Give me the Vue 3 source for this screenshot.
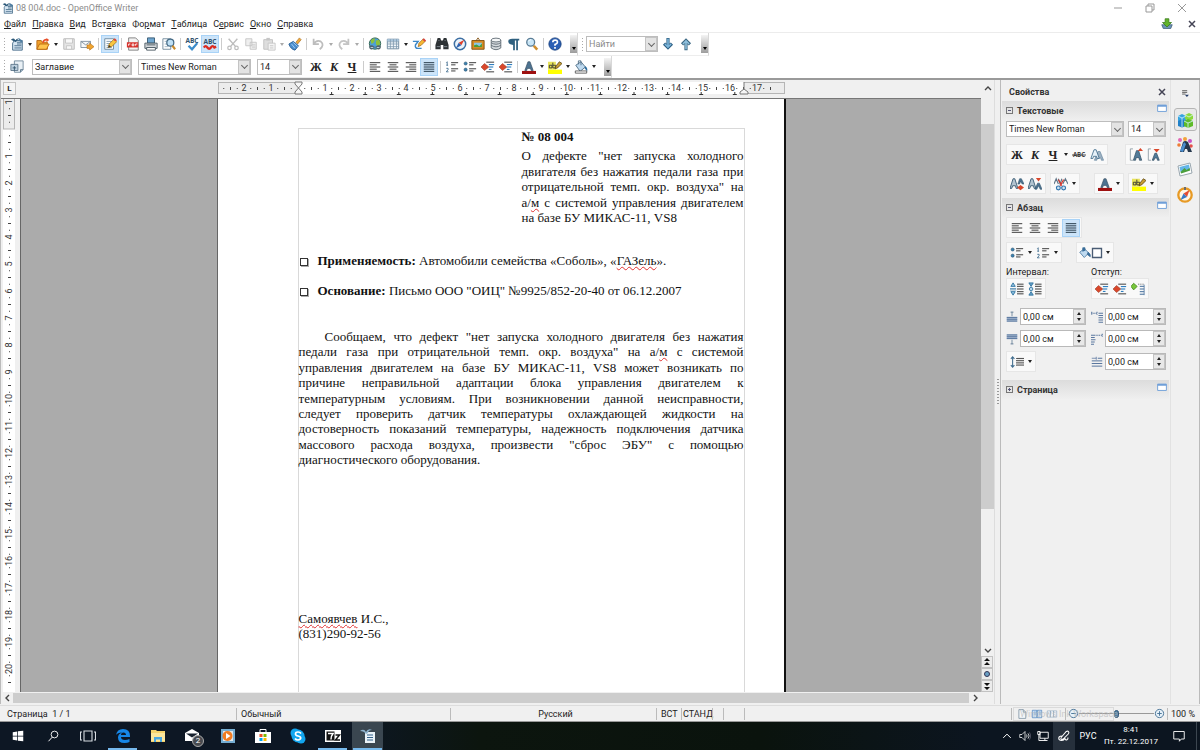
<script setup>
import { h, ref } from 'vue'

const lines = (x, ys, w, c = '#555') =>
  ys.map((y, i) => `<path d="M${Array.isArray(x) ? x[i] : x} ${y}h${Array.isArray(w) ? w[i] : w}" stroke="${c}" stroke-width="1.3" fill="none"/>`).join('')

const letterA = (x, fill = '#4d7391') =>
  `<path d="M${x} 12L${x + 3.6} 2h2.4L${x + 9.6} 12h-2.4l-.7-2.4h-3.6L${x + 2.2} 12z" fill="${fill}" stroke="#33495c" stroke-width=".7"/>`

const numbering =
  '<path d="M2.5 2v4M1.5 3l1-1M1.5 6h2M1.5 9.5h2v1.5l-2 2.500h2.500" stroke="#3f6c8e" stroke-width="1" fill="none"/>' + lines(7, [3, 5.5, 10, 12.5], [8, 5, 8, 5])
const bullets =
  '<circle cx="3" cy="4" r="1.800" fill="#3b82b0" stroke="#2a4d68" stroke-width=".6"/><circle cx="3" cy="11" r="1.800" fill="#3b82b0" stroke="#2a4d68" stroke-width=".6"/>' + lines(7, [3, 5.500, 10, 12.500], [8, 5, 8, 5])
const outdent =
  '<path d="M0 8l4-4 5 4-5 4z" fill="#d9472b" stroke="#8f3a26" stroke-width=".6"/>' + lines(6, [2.500, 13.500], 9) + lines(9, [5.200, 8, 10.800], [6, 5, 3], '#2f7fc0')
const page = '<path d="M3 1h7l4 4v10H3z" fill="#f4f8fb" stroke="#5a7388"/><path d="M10 1v4h4" fill="#d5e2ec" stroke="#5a7388"/>'

const icons = {
  writer: '<path d="M5 4h9v11H3V7z" fill="#d7e6f2" stroke="#3c6482"/><path d="M1 3q4-3 5 1q2-3 5-2q-3 0-4 4z" fill="#2c5878"/><path d="M8 6h5M8 8h5M5 10h8M5 12.500h8" stroke="#3c6482"/><path d="M10 1l4 3v3l-4-3z" fill="#4f7ea1"/>',
  open: '<path d="M1 14V4h5l1 2h6v8z" fill="#f0a02c" stroke="#b76710"/><path d="M1 14l3-6h11l-3 6z" fill="#ffc44d" stroke="#b76710"/><path d="M7 6q1-4 5-4V1l3 2.500-3 2.500V4q-3 0-3 3z" fill="#e8502c"/>',
  save: '<path d="M2 2h12v12H2z" fill="#e6e6e6" stroke="#b8b8b8"/><path d="M4 2h8v5H4zM5 10h6v4H5z" fill="#f8f8f8" stroke="#c2c2c2"/>',
  mail: '<path d="M1 5h11v7H1z" fill="#f7f9fa" stroke="#7d8e9c"/><path d="M1 5l5.500 4L12 5" stroke="#7d8e9c" fill="none"/><path d="M8 9h3V7l5 4-5 4v-2H8z" fill="#f0a530" stroke="#b56e16" stroke-width=".7"/>',
  edit: '<path d="M2 2h10v12H2z" fill="#fff" stroke="#67859b"/><path d="M4 5h6M4 7.500h5M4 10h3M4 12h6" stroke="#7794aa"/><path d="M6 12l1-4 6-6 3 3-6 6z" fill="#f9c640" stroke="#9a6a1a" stroke-width=".8"/><path d="M6 12l1-3 2 2z" fill="#333"/><path d="M12 3l1.500-1.500 2 2L14 5z" fill="#d44"/>',
  pdf: '<path d="M3 1h8l3 3v11H3z" fill="#f2f2f2" stroke="#777"/><path d="M1 6h13v6H1z" fill="#d6322c"/><path d="M3 10V8h2M7 10V8h2v2zM11 10V8h2" stroke="#fff" fill="none"/>',
  print: '<path d="M4 1h8v6H4z" fill="#6fa6d0" stroke="#34566f"/><path d="M1 7h14v6H1z" fill="#d5d9dc" stroke="#44525d"/><path d="M3 12h10v3H3z" fill="#fafafa" stroke="#44525d"/><path d="M3 9h10" stroke="#44525d"/>',
  preview: '<path d="M1 2h9v12H1z" fill="#fff" stroke="#6c8597"/><path d="M3 5h4M3 8h3M3 11h4" stroke="#9fb3c2"/><circle cx="9.500" cy="6.500" r="4" fill="#bfe0f5" stroke="#426884" stroke-width="1.400"/><path d="M12 10l3 4" stroke="#c98b2e" stroke-width="2.400"/>',
  spell: '<text x="8" y="7" text-anchor="middle" font-family="Open Sans, sans-serif" font-size="7.500" font-weight="700" fill="#31526c">ABC</text><path d="M4 10l4 4 6-7" stroke="#3c8dcb" stroke-width="2.600" fill="none"/>',
  autospell: '<text x="8" y="8" text-anchor="middle" font-family="Open Sans, sans-serif" font-size="7.500" font-weight="700" fill="#31526c">ABC</text><path d="M1 12q2-3 4 0t4 0t4 0l2-1" stroke="#dc2a20" stroke-width="2.600" fill="none"/>',
  cut: '<path d="M3 2l8 9M13 2L5 11" stroke="#bdbdbd" stroke-width="1.600"/><circle cx="4" cy="12.500" r="2" fill="none" stroke="#bdbdbd" stroke-width="1.400"/><circle cx="12" cy="12.500" r="2" fill="none" stroke="#bdbdbd" stroke-width="1.400"/>',
  copy: '<path d="M2 2h7v8H2zM7 6h7v8H7z" fill="#efefef" stroke="#c4c4c4"/><path d="M9 9h4M9 11.500h4" stroke="#c4c4c4"/>',
  paste: '<path d="M2 3h10v11H2z" fill="#dedede" stroke="#c0c0c0"/><path d="M5 1h4v3H5z" fill="#c6c6c6"/><path d="M7 7h8v8H7z" fill="#f4f4f4" stroke="#c4c4c4"/><path d="M9 10h4M9 12.500h4" stroke="#c4c4c4"/>',
  brush: '<path d="M9 6l4-5 2 2-4 5z" fill="#f0a93a" stroke="#a3671a" stroke-width=".7"/><path d="M1 8l5-3 6 5-4 5q-5-1-7-7z" fill="#4b8ecf" stroke="#265c90"/><path d="M4 8l4 5M6 6l5 5" stroke="#a9d0f0"/>',
  undo: '<path d="M3 2v6h6M3 8q3-5 8-3q5 4-1 9" fill="none" stroke="#bdbdbd" stroke-width="2"/>',
  redo: '<path d="M13 2v6H7M13 8q-3-5-8-3q-5 4 1 9" fill="none" stroke="#c4c4c4" stroke-width="2"/>',
  globe: '<circle cx="8" cy="7.500" r="6.500" fill="#4d9fd6" stroke="#2c5f46"/><path d="M3 4q3-3 5-2l-1 4-3 2zM9 4l4-1 1 5-3 3-2-3z" fill="#8fc03c"/><path d="M1 11q3-3 6 0h2q3-3 6 0q-1 4-4 3l-2-2h-2l-2 2q-3 1-4-3z" fill="#51636e"/><path d="M3 12h3M10 12h3" stroke="#c9dbe6"/>',
  table: '<path d="M1.500 2.500h13v11h-13z" fill="#f2f7fb" stroke="#66839a"/><path d="M1.500 2.500h13v2.500h-13z" fill="#a9c5dc"/><path d="M1.500 5.500h13M1.500 8h13M1.500 11h13M5 2.500v11M8.500 2.500v11M12 2.500v11" stroke="#7e9ab0" stroke-width=".9"/>',
  draw: '<path d="M1 5h6l-3 4q-1 4 3 4h4" fill="none" stroke="#3b87c8" stroke-width="1.700"/><path d="M7 11l1-4 5-5 2.500 2.500-5 5z" fill="#f7b733" stroke="#9a661b" stroke-width=".8"/><path d="M12 3l1.500-1.500L16 4l-1.500 1.500z" fill="#da4444"/>',
  find: '<path d="M3 1h3l1 3h2l1-3h3l2.500 8v5h-6V9h-3v5h-6V9z" fill="#2d3235"/><path d="M2 11h4M10 11h4M4 4h1M11 4h1" stroke="#87919a"/>',
  navigator: '<circle cx="8" cy="8" r="6.500" fill="#e9f3fb" stroke="#3d6fa3" stroke-width="1.700"/><path d="M13 3L9.500 9.500 6.500 6.500z" fill="#e0402c"/><path d="M3 13l3.500-6.500 3 3z" fill="#2d62b0"/>',
  gallery: '<path d="M1 4h14v10H1z" fill="#d78b23" stroke="#7d4c0c"/><path d="M3.500 6.500h9v5h-9z" fill="#8cc6e8"/><path d="M3.500 11.500v-2l3-1 3 2 3-3v4z" fill="#4b9c38"/><path d="M6 4l2-3 2 3" stroke="#7d4c0c" fill="none"/>',
  database: '<path d="M2.500 3.500v9q5.500 4 11 0v-9" fill="#d5dade" stroke="#5b6770"/><ellipse cx="8" cy="3.500" rx="5.500" ry="2.200" fill="#f5f7f8" stroke="#5b6770"/><path d="M2.500 6.500q5.500 3.500 11 0M2.500 9.500q5.500 3.500 11 0" fill="none" stroke="#5b6770"/>',
  pilcrow: '<path d="M14 2H6Q1 2 1.500 5.500T7 9v6h2V4h1.500v11h2V4H14z" fill="#2f607f"/>',
  zoom: '<circle cx="6.500" cy="6" r="4.500" fill="#c9e6f7" stroke="#5a7c95" stroke-width="1.500"/><path d="M10 10l4 4.500" stroke="#cf8f30" stroke-width="3"/><path d="M4 5q1-2 3-2" stroke="#fff" fill="none"/>',
  help: '<circle cx="8" cy="8" r="7" fill="#2b5fb5" stroke="#17407f"/><path d="M5.500 6q0-2.500 2.700-2.500T10.800 6Q10.800 7.500 8 8.500V10M8 11.500v2" fill="none" stroke="#fff" stroke-width="1.900"/>',
  down: '<path d="M8 1v11M3.500 7.500L8 12l4.500-4.500" fill="none" stroke="#2e6186" stroke-width="3.600"/><path d="M8 2v9M4.500 8L8 11.500 11.500 8" fill="none" stroke="#7db6da" stroke-width="1.800"/>',
  up: '<path d="M8 15V4M3.500 8.500L8 4l4.500 4.500" fill="none" stroke="#3c6884" stroke-width="3.600"/><path d="M8 14V5M4.500 8L8 4.500 11.500 8" fill="none" stroke="#8fc0dd" stroke-width="1.800"/>',
  styles: '<path d="M5 1h10v10l-3 3H5z" fill="#e9f0f5" stroke="#6c8597"/><path d="M1 5h8v7H1z" fill="#bed0de" stroke="#5a7388"/><path d="M5 7v5M3 9h4" stroke="#31526c"/><path d="M12 14v-3h3" fill="#9fb6c8" stroke="#5a7388"/>',
  left: lines(2, [3, 5.500, 8, 10.500, 13], [12, 8, 12, 8, 12]),
  center: lines([2, 4, 2, 4, 2], [3, 5.500, 8, 10.500, 13], [12, 8, 12, 8, 12]),
  right: lines([2, 6, 2, 6, 2], [3, 5.500, 8, 10.500, 13], [12, 8, 12, 8, 12]),
  justify: lines(2, [3, 5.500, 8, 10.500, 13], 12, '#3c5060'),
  numbering, bullets, outdent,
  indent: outdent,
  color: letterA(3.200) + '<path d="M0 12.500h16v3.500H0z" fill="#9e1010"/>',
  highlight: '<path d="M0 11h16v5H0z" fill="#ffff00"/><path d="M0 2h9v9H0z" fill="#e8e35a"/><path d="M1.500 9V6h3v3zM5.500 3v6h3V6h-3" stroke="#333" fill="none"/><path d="M8 10l1-3 4-5 3 2-5 5z" fill="#c99e32" stroke="#594512" stroke-width=".9"/>',
  fill: '<path d="M2 6l6-4 5 6-6 5z" fill="#bfdaf0" stroke="#4b6a82"/><path d="M5 5V1h3v5" fill="none" stroke="#4b6a82"/><path d="M13 7q3 2 2 6l-3-4z" fill="#2d6d9f"/><path d="M1.500 12.500h13v2.500h-13z" fill="#fff" stroke="#555"/>',
  strike: '<text x="8" y="10.500" text-anchor="middle" font-family="Open Sans, sans-serif" font-size="7" font-weight="700" fill="#444">ABC</text><path d="M0 8h16" stroke="#333"/>',
  shadow: '<path d="M5 14L9 4h2.500l4 10h-2.500l-.7-2.500H8.500L7.800 14z" fill="#9cb1c2" stroke="#5d7f99" stroke-width=".7"/><path d="M1 12L4.600 2H7l3.600 10H8.200L7.500 9.500H4L3.300 12z" fill="#e7f1f8" stroke="#48718f"/>',
  grow: '<path d="M1.500 1v13M1.500 1h3M1.500 14h3" stroke="#8d9aa4" fill="none"/><path d="M5 14L8.500 3h2.500l3.500 11h-2.500l-.7-3H8.200l-.7 3z" fill="#527b99" stroke="#2e4a60" stroke-width=".8"/><path d="M13 0l3 3.500h-6z" fill="#d9472b"/>',
  shrink: '<path d="M1.500 1v13M1.500 1h3M1.500 14h3" stroke="#8d9aa4" fill="none"/><path d="M6 14l3-8h2l3 8h-2l-.7-2.500H8.700L8 14z" fill="#527b99" stroke="#2e4a60" stroke-width=".8"/><path d="M7.500 1h7L11 5z" fill="#d9472b"/>',
  superscript: '<path d="M0 13L3.500 2h2L9 13H7L6.300 10H3L2 13z" fill="#b3c4d0" stroke="#33566f"/><path d="M9 8l2-6h2l3 6h-2l-2-3-1 3z" fill="#4d7391" stroke="#33566f" stroke-width=".7"/><path d="M8 12l4-3 4 3-4 3z" fill="#d9472b"/>',
  subscript: '<path d="M0 13L3.500 2h2L9 13H7L6.300 10H3L2 13z" fill="#b3c4d0" stroke="#33566f"/><path d="M8 14l3-7h2l3 7h-2l-2-4-2 4z" fill="#4d7391" stroke="#33566f" stroke-width=".7"/><path d="M9 1h6l-3 4z" fill="#d9472b"/>',
  spacing: '<path d="M0 8l2.500-6L5 8M5 2l2 6 2-6M10 8l3-6 3 6" fill="none" stroke="#607688" stroke-width="1.300"/><path d="M5 3l4 7M11 3L7 10" stroke="#d9352b" stroke-width="1.300"/><circle cx="5" cy="12.500" r="2.200" fill="#cfe3f2" stroke="#2f73ad" stroke-width="1.300"/><circle cx="11" cy="12.500" r="2.200" fill="#cfe3f2" stroke="#2f73ad" stroke-width="1.300"/>',
  paraup: '<path d="M1 5l2.500-4L6 5zM1 11l2.500 4L6 11z" fill="#8fc0e0" stroke="#2f73a0"/><path d="M0 7.500h7M0 9h7" stroke="#2f73a0" stroke-width=".8"/>' + lines(8, [2.500, 5, 8, 11, 13.500], 7.500),
  paradown: '<path d="M1 1h5L3.500 5zM1 15h5L3.500 11z" fill="#6aa3c8" stroke="#2f73a0"/><circle cx="3.500" cy="8" r="2" fill="#b9d8ed" stroke="#2f73a0"/>' + lines(8, [2.500, 5, 8, 11, 13.500], 7.500),
  hanging: '<path d="M0 5l3-3.500L7 5 3 9z" fill="#79c83c" stroke="#4c8d22"/><path d="M8 2.500h7" stroke="#777" stroke-dasharray="1.500 1"/>' + lines(10, [5, 8, 11, 14], 5, '#5a7fa6') + '<path d="M15 3v12" stroke="#5a7fa6"/>',
  above: '<path d="M8 1v6M6 1.500h4" stroke="#55738f"/><path d="M1 8h14v6H1z" fill="#a9bbd2"/>' + lines(1, [8.500, 11, 13.500], 14, '#55739c'),
  below: '<path d="M1 2h14v6H1z" fill="#a9bbd2"/>' + lines(1, [2.500, 5, 7.500], 14, '#55739c') + '<path d="M8 9v6M6 14.500h4" stroke="#55738f"/>',
  before: '<path d="M0 3h8M1 1v4M8 1v4" stroke="#55739c" stroke-width="1.300" stroke-dasharray="2 1"/>' + lines(10, [3, 6, 9, 12, 15], 6, '#55739c'),
  after: lines(0, [3, 6, 9, 12, 15], [6, 5, 6, 5, 4], '#55739c') + '<path d="M7 3h8M15 1v4" stroke="#55739c" stroke-width="1.300" stroke-dasharray="2 1"/>',
  firstline: '<path d="M1 3h6M7 1v4" stroke="#55739c"/>' + lines([9, 1, 1, 1], [3, 6.500, 10, 13.500], [6, 14, 14, 14], '#55739c'),
  linespace: '<path d="M3 2v12M1 4.500L3 2l2 2.500M1 11.500L3 14l2-2.500" fill="none" stroke="#3f6c8e" stroke-width="1.200"/>' + lines(7, [4, 6.500, 9, 11.500], 9),
  paint: '<path d="M1 7l6-5 6 6-6 6z" fill="#bfdaf0" stroke="#3c6d97"/><path d="M5 6V1h3v4M12 7q4 2 3 6l-4-3z" fill="#396e9d" stroke="#3c6d97"/>',
  border: '<path d="M2 2h12v12H2z" fill="#fff" stroke="#4a5c74" stroke-width="1.800"/>',
  more: '<path d="M1 3.500h14v10H1z" fill="#fff" stroke="#6f9fd8" stroke-width="1.500"/><path d="M1 3h14v3H1z" fill="#6f9fd8"/>',
  update: '<path d="M1 9l2 5h10l2-5z" fill="#6c93b5" stroke="#3f5e7a"/><path d="M5.500 1h5v5H14l-6 6-6-6h3.500z" fill="#62b32a" stroke="#37781a"/>',
  menu: '<path d="M2 3h9M2 6h9M2 9h6" stroke="#555" stroke-width="1.600"/><path d="M7 10h7l-3.500 4z" fill="#223a66"/>',
  cubes: '<path d="M1 4l4-2 4 2v5l-4 2-4-2z" fill="#36a4e0"/><path d="M1 9l4-2 4 2v5l-4 1.500L1 14z" fill="#2080c8"/><path d="M8 3l4-2 4 2v4l-4 2-4-2z" fill="#8bd93c"/><path d="M7 9l4-2 5 2v5l-5 2-4-2z" fill="#5ebb28"/><path d="M1 4l4 2 4-2M5 6v9M7 9l4 2 5-2M11 11v5M8 3l4 2 4-2" fill="none" stroke="#d6f2ff" stroke-width=".8"/>',
  stylesbar: '<circle cx="3" cy="3" r="2" fill="#e467b4"/><circle cx="8" cy="2" r="2" fill="#f2a33a"/><circle cx="13" cy="4" r="2" fill="#c653c7"/><circle cx="2" cy="8" r="1.800" fill="#ed7c35"/><circle cx="14" cy="9" r="1.800" fill="#e6504b"/><path d="M3 15l3-10q2-2 5 0l4 10h-4l-1-3H8l-1 3z" fill="#26374d"/><path d="M3 14l4-9 2 2-3 8z" fill="#4b8fd0"/>',
  gallerybar: '<path d="M1 4l12-3 2 10-12 3z" fill="#fff" stroke="#9aa7af"/><path d="M2.500 5l9.500-2.500 1 5-9.500 2.500z" fill="#62b5e8"/><path d="M3.500 10l4-4 2 2 3-2 .7 2.500-9 3z" fill="#4c9f3c"/>',
  compass: '<circle cx="8" cy="8" r="6.700" fill="#fff7e8" stroke="#e79a25" stroke-width="2.300"/><path d="M12.500 3L10 10 6.500 6.500z" fill="#e44d34"/><path d="M3.500 13L6.500 6.500 10 10z" fill="#3779c7"/><path d="M7 0h2v3H7z" fill="#6d6d6d"/>',
  pageone: page,
  pagetwo: '<path d="M.5 2h7v12h-7zM8.500 2h7v12h-7z" fill="#cfe3f7" stroke="#3d76b5"/><path d="M3 5h3M3 8h3M11 5h3M11 8h3" stroke="#3d76b5"/>',
  pagebook: '<path d="M.5 3h5v10h-5zM5.500 3h5v10h-5zM10.500 3h5v10h-5z" fill="#f2f6fa" stroke="#8da5bb"/>',
  start: '<path d="M1 3l6-1v5.500H1zM8 1.800L15 1v6.500H8zM1 8.500h6V14l-6-1zM8 8.500h7V15l-7-.8z" fill="#fff"/>',
  search: '<circle cx="10" cy="6" r="4.500" fill="none" stroke="#fff" stroke-width="1.200"/><path d="M7 9.500L2 15" stroke="#fff" stroke-width="1.300"/>',
  taskview: '<path d="M4 3h8v10H4zM2 4H.5v8H2M14 4h1.500v8H14" fill="none" stroke="#d8dde2" stroke-width="1.100"/>',
  edge: '<path d="M1 7Q2 1 8 1q7 0 7 7v1H6q0 3 4 3 2.500 0 4.500-1v3q-2 1-5 1Q3 15 3 9.500 3 6 7 4.500 2.500 4.500 1 7zM6 7h5q0-2.500-2.500-2.500T6 7z" fill="#1687e8"/>',
  explorer: '<path d="M1 2h5l1 1h8v11H1z" fill="#f6d36b"/><path d="M1 5h14v8H1z" fill="#fce69b"/><path d="M4 14V9h8v5h-2v-2.500H6V14z" fill="#4ba7df"/>',
  envelope: '<path d="M0 5l7-4 7 4v8H0z" fill="#fff"/><path d="M1 5.500h12L7 9.500z" fill="#17212e"/>',
  player: '<path d="M1 1h14v14H1z" fill="#75add2"/><path d="M3 3h10v10H3z" fill="#e2e8ec"/><circle cx="7.500" cy="8" r="5" fill="#f07c22"/><path d="M6 5l4.500 3L6 11z" fill="#fff"/>',
  store: '<path d="M0 4h16v11H0z" fill="#fff"/><path d="M5 4V1.500h6V4" fill="none" stroke="#fff"/><path d="M4.500 6h3v3h-3z" fill="#f05022"/><path d="M8.500 6h3v3h-3z" fill="#7fba00"/><path d="M4.500 10h3v3h-3z" fill="#00a4ef"/><path d="M8.500 10h3v3h-3z" fill="#ffb900"/>',
  skype: '<circle cx="5" cy="5" r="4.500" fill="#12a5ee"/><circle cx="11" cy="11" r="4.500" fill="#12a5ee"/><circle cx="8" cy="8" r="6.500" fill="#12a5ee"/><path d="M11 5.500Q10 4 8 4 5.500 4 5.500 6q0 1.500 2.500 2 2.700.5 2.700 2T8 12Q6 12 5 10.500" fill="none" stroke="#fff" stroke-width="1.700"/>',
  sevenzip: '<path d="M0 2h16v12H0z" fill="#fff"/><path d="M1.500 3.500h8v9h-8z" fill="#111"/><path d="M3 5.500h5q-2 2.500-2 6" fill="none" stroke="#fff" stroke-width="1.500"/><path d="M10.500 7h4l-4 5h4.500" fill="none" stroke="#111" stroke-width="1.500"/>',
  writertask: '<path d="M5 4h10v11H5z" fill="#e9f2f8"/><path d="M7 7h6M7 9.500h6M7 12h6" stroke="#33618a"/><path d="M0 3q4-3 6 1q2-4 6-2q-4 0-4 3l-2 1Q4 3 0 3z" fill="#8fb4cf"/>',
  chevron: '<path d="M2 11l6-6 6 6" fill="none" stroke="#fff" stroke-width="1.600"/>',
  speaker: '<path d="M1 6h3l4-4v12l-4-4H1z" fill="none" stroke="#fff"/><path d="M10 6q1.500 2 0 4M12 4.500q3 3.500 0 7" fill="none" stroke="#fff"/><path d="M14 3q3.500 5 0 10" fill="none" stroke="#667"/>',
  network: '<path d="M4 3h11v8H4zM8 14h6M10.500 11v3M1 2h3v4H1zM2.500 6v8H8" fill="none" stroke="#fff" stroke-width="1.200"/>',
  pen: '<path d="M5 9l6-7q2-1 3 0t0 3l-7 7q-2 1-3 0t1-3M5 8q-4 0-4 3t4 3q3 0 4-3 1 3 3 2t1-3" fill="none" stroke="#fff" stroke-width="1.400"/>',
  action: '<path d="M1 2h14v10h-4l-2.500 3V12H1z" fill="none" stroke="#fff" stroke-width="1.200"/>'
}

const Icon = (props) => h('svg', { class: 'icon', viewBox: '0 0 16 16', 'aria-hidden': 'true', innerHTML: icons[props.name] })
Icon.props = ['name']

const menus = ['Файл', 'Правка', 'Вид', 'Вставка', 'Формат', 'Таблица', 'Сервис', 'Окно', 'Справка']
const accel = { Вставка: 3, Сервис: 1, Формат: 2 }
const split = (m) => { const i = accel[m] || 0; return [m.slice(0, i), m[i], m.slice(i + 1)] }

const standard = [
  { i: 'writer', t: 'Создать', d: 1 }, { i: 'open', t: 'Открыть', d: 1 }, { i: 'save', t: 'Сохранить' }, { i: 'mail', t: 'Отправить' }, '|',
  { i: 'edit', t: 'Правка файла', on: 1 }, '|',
  { i: 'pdf', t: 'Экспорт в PDF' }, { i: 'print', t: 'Печать' }, { i: 'preview', t: 'Просмотр' }, '|',
  { i: 'spell', t: 'Орфография' }, { i: 'autospell', t: 'Автопроверка', on: 1 }, '|',
  { i: 'cut', t: 'Вырезать' }, { i: 'copy', t: 'Копировать' }, { i: 'paste', t: 'Вставить', d: 1, dim: 1 }, { i: 'brush', t: 'Формат по образцу' }, '|',
  { i: 'undo', t: 'Отменить', d: 1, dim: 1 }, { i: 'redo', t: 'Вернуть', d: 1, dim: 1 }, '|',
  { i: 'globe', t: 'Гиперссылка' }, { i: 'table', t: 'Таблица', d: 1 }, { i: 'draw', t: 'Рисование' }, '|',
  { i: 'find', t: 'Найти и заменить' }, { i: 'navigator', t: 'Навигатор' }, { i: 'gallery', t: 'Галерея' }, { i: 'database', t: 'Источники данных' }, { i: 'pilcrow', t: 'Непечатаемые символы' }, { i: 'zoom', t: 'Масштаб' }, '|',
  { i: 'help', t: 'Справка' }
]
const formatting = [
  { c: 'Ж', k: 'bold', t: 'Жирный' }, { c: 'К', k: 'italic', t: 'Курсив' }, { c: 'Ч', k: 'under', t: 'Подчёркнутый' }, '|',
  { i: 'left', t: 'По левому краю' }, { i: 'center', t: 'По центру' }, { i: 'right', t: 'По правому краю' }, { i: 'justify', t: 'По ширине', on: 1 }, '|',
  { i: 'numbering', t: 'Нумерация' }, { i: 'bullets', t: 'Маркеры' }, { i: 'outdent', t: 'Уменьшить отступ' }, { i: 'indent', t: 'Увеличить отступ' }, '|',
  { i: 'color', t: 'Цвет шрифта', d: 1 }, { i: 'highlight', t: 'Выделение цветом', d: 1 }, { i: 'fill', t: 'Цвет фона', d: 1 }
]

const CM = 27
const hTicks = []
for (let q = -11; q <= 70; q++) {
  if (q === 0) continue
  const x = 80 + (q * CM) / 4
  hTicks.push(q % 4 === 0 ? { x, n: Math.abs(q / 4) } : { x, tall: q % 2 === 0 })
}
const hTabs = Array.from({ length: 13 }, (_, k) => 80 + (k + 1) * 33.6).filter((x) => x < 526)
const vTicks = []
for (let q = -4; q <= 82; q++) {
  if (q === 0) continue
  const y = 30 + (q * CM) / 4
  vTicks.push(q % 4 === 0 ? { y, n: Math.abs(q / 4) } : { y, tall: q % 2 === 0 })
}

const intro = [
  [['О дефекте "нет запуска холодного']],
  [['двигателя без нажатия педали газа при']],
  [['отрицательной темп. окр. воздуха" на']],
  [['а/'], ['м', 1], [' с системой управления двигателем']],
  [['на базе БУ МИКАС-11, VS8']]
]
const body = [
  [['Сообщаем, что дефект "нет запуска холодного двигателя без нажатия']],
  [['педали газа при отрицательной темп. окр. воздуха" на а/'], ['м', 1], [' с системой']],
  [['управления двигателем на базе БУ МИКАС-11, VS8 может возникать по']],
  [['причине неправильной адаптации блока управления двигателем к']],
  [['температурным условиям. При возникновении данной неисправности,']],
  [['следует проверить датчик температуры охлаждающей жидкости на']],
  [['достоверность показаний температуры, надежность подключения датчика']],
  [['массового расхода воздуха, произвести "сброс ЭБУ" с помощью']],
  [['диагностического оборудования.']]
]

const tasks = [
  { i: 'start', t: 'Пуск' }, { i: 'search', t: 'Поиск' }, { i: 'taskview', t: 'Представление задач' }, { i: 'edge', t: 'Edge', run: 1 },
  { i: 'explorer', t: 'Проводник' }, { i: 'envelope', t: 'Почта', badge: 2 }, { i: 'player', t: 'Проигрыватель' }, { i: 'store', t: 'Магазин' },
  { i: 'skype', t: 'Skype' }, { i: 'sevenzip', t: '7-Zip', run: 1 }, { i: 'writertask', t: 'OpenOffice Writer', run: 1, active: 1 }
]
const decks = [['cubes', 'Свойства'], ['stylesbar', 'Стили'], ['gallerybar', 'Галерея'], ['compass', 'Навигатор']]
const spinRows = [
  [['above', 'Над абзацем', 'sp1'], ['before', 'Перед текстом', 'sp2']],
  [['below', 'Под абзацем', 'sp3'], ['after', 'После текста', 'sp4']],
  [null, ['firstline', 'Первая строка', 'sp5']]
]
const spins = ref({ sp1: '0,00 см', sp2: '0,00 см', sp3: '0,00 см', sp4: '0,00 см', sp5: '0,00 см' })
const zoomLevel = ref(50)
</script>

<template>
  <div class="app">
    <header class="titlebar">
      <Icon name="writer" class="s12" /><span class="title">08 004.doc - OpenOffice Writer</span>
      <div class="winbtns">
        <button aria-label="Свернуть"><svg viewBox="0 0 12 12"><path d="M2 6h8" /></svg></button>
        <button aria-label="Восстановить"><svg viewBox="0 0 12 12"><path d="M2 4h6v6H2zM4 4V2h6v6H8" /></svg></button>
        <button aria-label="Закрыть"><svg viewBox="0 0 12 12"><path d="M2 2l8 8M10 2l-8 8" /></svg></button>
      </div>
    </header>
    <nav class="menubar">
      <button v-for="m in menus" :key="m">{{ split(m)[0] }}<u>{{ split(m)[1] }}</u>{{ split(m)[2] }}</button>
      <div class="docbtns">
        <button aria-label="Обновления"><Icon name="update" class="s12" /></button>
        <button class="closedoc" aria-label="Закрыть документ"><svg viewBox="0 0 12 12"><path d="M3 3l6 6M9 3l-6 6" /></svg></button>
      </div>
    </nav>

    <div class="toolrow">
      <div class="toolbar">
        <i class="grip"></i>
        <template v-for="(b, n) in standard" :key="n">
          <i v-if="b === '|'" class="sep"></i>
          <template v-else>
            <button class="tool" :class="{ on: b.on }" :aria-label="b.t"><Icon :name="b.i" /></button>
            <button v-if="b.d" class="drop" :class="{ dim: b.dim }" :aria-label="b.t + ': список'"></button>
          </template>
        </template>
        <button class="overflow" aria-label="Ещё"></button>
      </div>
      <div class="toolbar">
        <i class="grip"></i>
        <div class="combo find"><input type="text" placeholder="Найти" aria-label="Найти" /><button class="arrow" aria-label="Список"></button></div>
        <button class="tool" aria-label="Найти далее"><Icon name="down" /></button>
        <button class="tool" aria-label="Найти ранее"><Icon name="up" /></button>
        <button class="overflow" aria-label="Ещё"></button>
      </div>
    </div>
    <div class="toolrow second">
      <div class="toolbar">
        <i class="grip"></i>
        <button class="tool" aria-label="Стили"><Icon name="styles" /></button>
        <div class="combo style"><select aria-label="Стиль"><option>Заглавие</option></select><i class="arrow"></i></div>
        <div class="combo font"><select aria-label="Гарнитура"><option>Times New Roman</option></select><i class="arrow"></i></div>
        <div class="combo size"><select aria-label="Кегль"><option>14</option></select><i class="arrow"></i></div>
        <template v-for="(b, n) in formatting" :key="n">
          <i v-if="b === '|'" class="sep"></i>
          <template v-else>
            <button class="tool" :class="[b.k, { on: b.on }]" :aria-label="b.t"><Icon v-if="b.i" :name="b.i" /><span v-else>{{ b.c }}</span></button>
            <button v-if="b.d" class="drop" :aria-label="b.t + ': список'"></button>
          </template>
        </template>
        <button class="overflow" aria-label="Ещё"></button>
      </div>
    </div>

    <main class="workspace">
      <section class="editor">
        <div class="rulerrow">
          <button class="tabtype" aria-label="Тип табуляции">L</button>
          <div class="rulerwrap">
            <svg class="hruler" viewBox="0 0 567 16">
              <rect x="0.500" y="2.500" width="566" height="11" fill="#ececec" stroke="#b5b5b5" />
              <rect x="80" y="2" width="446" height="12" fill="#fff" />
              <template v-for="t in hTicks" :key="t.x">
                <text v-if="t.n" :x="t.x" y="11">{{ t.n }}</text>
                <rect v-else :x="t.x - 0.5" :y="t.tall ? 7 : 8" width="1" :height="t.tall ? 3 : 1" fill="#444" />
              </template>
              <path v-for="x in hTabs" :key="x" :d="`M${x - 2} 14.500h4M${x} 12v3`" stroke="#333" fill="none" />
              <path d="M77 2h7v2l-3.500 4 3.500 4v2h-7v-2l3.500-4-3.500-4z" fill="#f6f6f6" stroke="#777" />
              <path d="M526 2v7l4 3v2h-8v-2l4-3" fill="#f6f6f6" stroke="#777" />
            </svg>
          </div>
        </div>
        <div class="vruler">
          <svg viewBox="0 0 12 590">
            <rect x="0.500" y="-1" width="11" height="31" fill="#ececec" stroke="#b5b5b5" />
            <template v-for="t in vTicks" :key="t.y">
              <text v-if="t.n" :transform="`translate(9 ${t.y}) rotate(-90)`">{{ t.n }}</text>
              <rect v-else :x="t.tall ? 5 : 6" :y="t.y - 0.5" :width="t.tall ? 3 : 1" height="1" fill="#444" />
            </template>
          </svg>
        </div>
        <div class="canvas">
          <article class="page">
            <div class="frame">
              <div class="head">
                <h1>№ 08 004</h1>
                <p class="lines">
                  <span v-for="(l, n) in intro" :key="n" class="line"><span v-for="(p, k) in l" :key="k" :class="{ err: p[1] }">{{ p[0] }}</span></span>
                </p>
              </div>
              <ul>
                <li><b>Применяемость:</b> Автомобили семейства «Соболь», «<span class="err">ГАЗель</span>».</li>
                <li><b>Основание:</b> Письмо ООО "ОИЦ" №9925/852-20-40 от 06.12.2007</li>
              </ul>
              <p class="lines body">
                <span v-for="(l, n) in body" :key="n" class="line"><span v-for="(p, k) in l" :key="k" :class="{ err: p[1] }">{{ p[0] }}</span></span>
              </p>
              <address><span class="err">Самоявчев</span> И.С.,<br />(831)290-92-56</address>
            </div>
          </article>
        </div>
        <div class="vscroll">
          <button aria-label="Вверх"><svg viewBox="0 0 12 12"><path d="M3 8l3-3 3 3" /></svg></button>
          <div class="track"><i class="thumb"></i></div>
          <button aria-label="Вниз"><svg viewBox="0 0 12 12"><path d="M3 5l3 3 3-3" /></svg></button>
          <button class="nav" aria-label="Предыдущая страница"><svg viewBox="0 0 12 12"><path class="solid" d="M3 5l3-3 3 3zM3 9l3-3 3 3z" /></svg></button>
          <button class="nav" aria-label="Навигация"><svg viewBox="0 0 12 12"><circle cx="6" cy="6" r="2.500" fill="#6aa0c4" stroke="#335" /></svg></button>
          <button class="nav" aria-label="Следующая страница"><svg viewBox="0 0 12 12"><path class="solid" d="M3 3l3 3 3-3zM3 7l3 3 3-3z" /></svg></button>
        </div>
        <div class="hscroll">
          <button aria-label="Влево"><svg viewBox="0 0 12 12"><path d="M8 3L5 6l3 3" /></svg></button>
          <i class="hthumb"></i>
          <button aria-label="Вправо"><svg viewBox="0 0 12 12"><path d="M5 3l3 3-3 3" /></svg></button>
        </div>
      </section>
      <div class="splitter"><i></i></div>

      <aside class="panel">
        <h2 class="phead">Свойства <button aria-label="Закрыть панель"><svg viewBox="0 0 12 12"><path d="M3 3l6 6M9 3l-6 6" /></svg></button></h2>
        <h3><i class="toggle"></i>Текстовые<button aria-label="Символы"><Icon name="more" /></button></h3>
        <div class="content text">
          <div class="prow fonts">
            <div class="combo pfont"><select aria-label="Шрифт"><option>Times New Roman</option></select><i class="arrow"></i></div>
            <div class="combo psize"><select aria-label="Размер"><option>14</option></select><i class="arrow"></i></div>
          </div>
          <div class="prow spread">
            <div class="group"><button class="tool bold">Ж</button><button class="tool italic">К</button><button class="tool under">Ч</button><button class="drop" aria-label="Вид подчёркивания"></button><button class="tool" aria-label="Зачёркнутый"><Icon name="strike" /></button><button class="tool" aria-label="Тень"><Icon name="shadow" /></button></div>
            <div class="group"><button class="tool" aria-label="Увеличить"><Icon name="grow" /></button><button class="tool" aria-label="Уменьшить"><Icon name="shrink" /></button></div>
          </div>
          <div class="prow colours">
            <div class="group"><button class="tool" aria-label="Верхний индекс"><Icon name="superscript" /></button><button class="tool" aria-label="Нижний индекс"><Icon name="subscript" /></button></div>
            <div class="group"><button class="tool" aria-label="Интервал"><Icon name="spacing" /></button><button class="drop" aria-label="Список"></button></div>
            <div class="group inkgroup"><button class="tool" aria-label="Цвет шрифта"><Icon name="color" /></button><button class="drop" aria-label="Список"></button></div>
            <div class="group"><button class="tool" aria-label="Выделение"><Icon name="highlight" /></button><button class="drop" aria-label="Список"></button></div>
          </div>
        </div>
        <h3><i class="toggle"></i>Абзац<button aria-label="Абзац"><Icon name="more" /></button></h3>
        <div class="content para">
          <div class="prow"><div class="group"><button v-for="a in ['left', 'center', 'right', 'justify']" :key="a" class="tool" :class="{ on: a === 'justify' }" :aria-label="a"><Icon :name="a" /></button></div></div>
          <div class="prow">
            <div class="group"><button class="tool" aria-label="Маркеры"><Icon name="bullets" /></button><button class="drop" aria-label="Список"></button><button class="tool" aria-label="Нумерация"><Icon name="numbering" /></button><button class="drop" aria-label="Список"></button></div>
            <div class="group fillgroup"><button class="tool two" aria-label="Фон"><Icon name="paint" /><Icon name="border" /></button><button class="drop" aria-label="Список"></button></div>
          </div>
          <div class="pcols labels"><span>Интервал:</span><span>Отступ:</span></div>
          <div class="pcols">
            <div class="group"><button class="tool" aria-label="Увеличить интервал"><Icon name="paraup" /></button><button class="tool" aria-label="Уменьшить интервал"><Icon name="paradown" /></button></div>
            <div class="group"><button class="tool" aria-label="Увеличить отступ"><Icon name="indent" /></button><button class="tool" aria-label="Уменьшить отступ"><Icon name="outdent" /></button><button class="tool" aria-label="Висячий отступ"><Icon name="hanging" /></button></div>
          </div>
          <div class="spins">
            <div v-for="(r, n) in spinRows" :key="n" class="pcols">
              <template v-for="(s, k) in r" :key="k">
                <div v-if="s" class="spin">
                  <label :for="s[2]" :aria-label="s[1]"><Icon :name="s[0]" /></label>
                  <div class="field"><input :id="s[2]" v-model="spins[s[2]]" type="text" /><span class="steps"><button aria-label="Больше"></button><button aria-label="Меньше"></button></span></div>
                </div>
                <div v-else class="group"><button class="tool" aria-label="Межстрочный интервал"><Icon name="linespace" /></button><button class="drop" aria-label="Список"></button></div>
              </template>
            </div>
          </div>
        </div>
        <h3><i class="toggle plus"></i>Страница<button aria-label="Страница"><Icon name="more" /></button></h3>
      </aside>
      <nav class="decks">
        <button aria-label="Меню"><Icon name="menu" /></button>
        <button v-for="(d, n) in decks" :key="d[0]" :class="['deck', { current: n === 0 }]" :aria-label="d[1]"><Icon :name="d[0]" /></button>
      </nav>
    </main>

    <footer class="status">
      <span class="c1">Страница&nbsp; 1 / 1</span><span class="c2">Обычный</span><span class="c3">Русский</span>
      <span class="c4">ВСТ</span><span class="c5">СТАНД</span><span class="c6"></span><span class="c7"></span><span class="c8"></span>
      <div class="views">
        <button aria-label="Одна страница"><Icon name="pageone" /></button><button aria-label="Несколько страниц"><Icon name="pagetwo" /></button><button aria-label="Книга"><Icon name="pagebook" /></button>
        <div class="ghost">Windows Ink Workspace</div>
      </div>
      <div class="zoomer">
        <button aria-label="Уменьшить масштаб"><svg viewBox="0 0 12 12"><circle cx="6" cy="6" r="4.500" /><path d="M3.500 6h5" /></svg></button>
        <input v-model="zoomLevel" type="range" min="0" max="100" aria-label="Масштаб" />
        <button aria-label="Увеличить масштаб"><svg viewBox="0 0 12 12"><circle cx="6" cy="6" r="4.500" /><path d="M3.500 6h5M6 3.500v5" /></svg></button>
      </div>
      <span class="pct">100 %</span>
    </footer>

    <footer class="taskbar">
      <button v-for="t in tasks" :key="t.i" class="task" :class="{ run: t.run, active: t.active }" :aria-label="t.t"><Icon :name="t.i" /><span v-if="t.badge" class="badge">{{ t.badge }}</span></button>
      <div class="tray">
        <button aria-label="Скрытые значки"><Icon name="chevron" class="s10" /></button>
        <button aria-label="Громкость"><Icon name="speaker" class="s12" /></button>
        <button aria-label="Сеть"><Icon name="network" class="s12" /></button>
        <button class="ink" aria-label="Windows Ink"><Icon name="pen" class="s12" /></button>
        <button class="lang">РУС</button>
        <time>8:41<br />Пт. 22.12.2017</time>
        <button class="act" aria-label="Центр уведомлений"><Icon name="action" class="s12" /></button>
      </div>
    </footer>
  </div>
</template>

<style>
html, body { margin: 0; background: #f0f0f0; }
</style>

<style scoped>
.app { height: 100vh; display: flex; flex-direction: column; overflow: hidden; background: #f0f0f0; color: #1c1c1c; font: 9px/12px Roboto, "Noto Sans", sans-serif; }
.app * { box-sizing: border-box; }
button, input, select { font: inherit; color: inherit; margin: 0; padding: 0; border: 0; background: none; border-radius: 0; }
button { display: flex; align-items: center; justify-content: center; }
svg { display: block; flex: none; width: 12px; height: 12px; }
.icon { width: 14px; height: 14px; }
.icon.s12 { width: 12px; height: 12px; }
.icon.s10 { width: 10px; height: 10px; }

.titlebar { flex: none; height: 16px; display: flex; align-items: center; gap: 2px; padding: 0 12px 0 2px; background: #fff; color: #8c8c8c; }
.winbtns { margin-left: auto; display: flex; gap: 20px; }
.winbtns path { fill: none; stroke: #999; }
.menubar { flex: none; height: 17px; display: flex; align-items: center; gap: 6px; padding: 0 2px 0 4px; background: #fff; border-bottom: 1px solid #ececec; }
.docbtns { margin-left: auto; display: flex; gap: 13px; }
.closedoc path, .phead path { stroke: #445; stroke-width: 1.5; }

.toolrow { flex: none; display: flex; height: 23px; background: #fff; }
.toolrow.second { height: 22px; }
.toolbar { display: flex; align-items: center; border-right: 1px solid #d8d8d8; border-bottom: 1px solid #ededed; }
.grip { width: 3px; height: 15px; margin: 0 2px 0 3px; background: radial-gradient(circle, #aaa 1px, transparent 1px) 0 0 / 3px 3px; }
.tool { width: 18px; height: 18px; flex: none; font: bold 12px/18px "Liberation Serif", serif; color: #222; }
.tool.on { background: #cce4f9; box-shadow: inset 0 0 0 1px #a9d3f7; }
.tool.italic { font-style: italic; }
.tool.under { text-decoration: underline; }
.drop { width: 8px; height: 18px; flex: none; }
.drop::after { content: ""; border: 2px solid transparent; border-top: 3px solid #222; border-bottom: 0; }
.drop.dim::after { border-top-color: #aaa; }
.sep { width: 1px; height: 12px; margin: 0 2px; background: #ccc; }
.overflow { width: 7px; height: 18px; margin-left: 6px; align-items: flex-end; padding-bottom: 3px; background: linear-gradient(#f4f4f4, #9d9d9d); }
.overflow::after { content: ""; border: 2px solid transparent; border-top: 3px solid #000; border-bottom: 0; }
.combo { position: relative; display: flex; height: 16px; flex: none; background: #fff; border: 1px solid #bdbdbd; }
.combo select, .combo input { flex: 1; min-width: 0; width: 100%; appearance: none; outline: 0; padding: 0 0 0 2px; }
.combo .arrow { position: absolute; right: 0; top: 0; bottom: 0; width: 12px; background: #e3e3e3; border: 1px solid #c4c4c4; pointer-events: none; display: flex; align-items: center; justify-content: center; }
.combo .arrow::after { content: ""; width: 4px; height: 4px; border: solid #666; border-width: 0 1px 1px 0; transform: translateY(-1px) rotate(45deg); }
.combo input::placeholder { color: #8a8a8a; opacity: 1; }
.find { width: 72px; margin-right: 1px; }
.style { width: 100px; margin: 0 6px 0 6px; }
.font { width: 113px; margin-right: 6px; }
.size { width: 45px; margin-right: 5px; }

.workspace { flex: 1; min-height: 0; display: flex; border-top: 2px solid #9a9a9a; }
.editor { flex: 1; min-width: 0; display: grid; grid-template: 19px minmax(0, 1fr) 12px / 20px minmax(0, 1fr) 13px; border-left: 1px solid #bbb; }
.rulerrow { grid-column: 1 / 3; display: flex; border-bottom: 1px solid #777; }
.tabtype { width: 13px; height: 13px; margin: 2px 4px 0 2px; border: 1px solid #c4c4c4; background: #f4f4f4; font-weight: 700; font-size: 8px; }
.rulerwrap { flex: 1; display: flex; justify-content: center; padding-left: 2px; }
.hruler { width: 567px; height: 16px; overflow: visible; }
.hruler text, .vruler text { font: 9px Roboto, sans-serif; fill: #333; text-anchor: middle; }
.vruler { overflow: hidden; border-right: 1px solid #666; padding-left: 2px; background: linear-gradient(#fff, #fff) 2px 0 / 12px 100% no-repeat; }
.vruler svg { width: 12px; height: 590px; overflow: visible; }
.canvas { background: #ababab; overflow: hidden; display: flex; justify-content: center; align-items: stretch; }
.page { width: 569px; flex: none; background: #fff; border-right: 2px solid #111; border-left: 1px solid #666; padding: 29px 39px 0 80px; font: 13px/15px "Liberation Serif", "Times New Roman", serif; color: #111; }
.frame { height: 100%; border: 1px solid #d9d9d9; border-bottom: 0; }
.head { margin-left: 223px; }
h1 { margin: 0 0 4px; font-size: 13px; line-height: 15px; }
.lines { margin: 0; display: grid; align-content: space-between; min-height: 77px; }
.line { display: block; white-space: nowrap; text-align: justify; text-align-last: justify; }
.line:last-child { text-align-last: left; }
.body { min-height: 138px; margin-top: 31px; }
.body .line:first-child { padding-left: 26px; }
.err { text-decoration: underline wavy #e03030 1px; text-underline-offset: 1px; text-decoration-skip-ink: none; }
ul { margin: 28px 0 0; padding: 0; list-style: none; display: grid; gap: 15px; }
li { display: flex; align-items: center; white-space: pre; }
li::before { content: ""; width: 6px; height: 6px; margin: 2px 10px 0 1px; border: 1px solid #333; box-shadow: 1px 1px 0 #aaa; }
address { margin-top: 144px; font-style: normal; }

.vscroll { grid-column: 3; grid-row: 1 / 3; display: flex; flex-direction: column; align-items: stretch; background: #f0f0f0; }
.vscroll button, .hscroll button { height: 12px; }
.vscroll path, .hscroll path { fill: none; stroke: #444; stroke-width: 1.400; }
.vscroll .solid { fill: #111; stroke: none; }
.vscroll > button:first-child { height: 16px; }
.track { flex: 1; padding-top: 28px; }
.thumb { display: block; height: 74%; background: #cdcdcd; }
.vscroll .nav { border: 1px solid #c2c2c2; background: #ececec; margin-right: 1px; }
.hscroll { grid-column: 1 / 3; display: flex; align-items: center; }
.hthumb { flex: 1; height: 10px; background: #cdcdcd; }
.splitter { width: 7px; flex: none; display: flex; align-items: center; justify-content: center; border-right: 1px solid #bbb; border-left: 1px solid #ddd; }
.splitter i { height: 26px; width: 2px; background: repeating-linear-gradient(#999 0 1px, transparent 1px 3px); }

.panel { width: 170px; flex: none; padding: 2px 1px 0; border-right: 1px solid #e2e2e2; }
.phead, h3 { margin: 0; font-size: 9px; line-height: 12px; font-weight: 700; display: flex; align-items: center; color: #333; }
.phead { height: 19px; padding: 0 1px 0 7px; }
.phead button, h3 button { margin-left: auto; }
h3 { height: 19px; gap: 4px; padding: 0 2px 0 4px; background: linear-gradient(#dcdcdc, #efefef); }
h3 .icon { width: 10px; height: 10px; margin-bottom: 5px; }
.toggle { width: 7px; height: 7px; border: 1px solid #777; background: linear-gradient(#557, #557) center / 3px 1px no-repeat; }
.toggle.plus { background: linear-gradient(#557, #557) center / 3px 1px no-repeat, linear-gradient(#557, #557) center / 1px 3px no-repeat; }
.content { padding: 0 4px; }
.prow { display: flex; margin-bottom: 4px; }
.group { display: flex; align-items: center; width: max-content; height: 21px; padding: 0 1px; background: #f9f9f9; border: 1px solid #e6e6e6; }
.prow.fonts { margin: 1px 0 7px; }
.prow.spread { margin-bottom: 8px; justify-content: space-between; }
.pfont { width: 118px; margin-right: 4px; }
.psize { width: 38px; }
.colours { gap: 4px; }
.inkgroup { margin-left: 10px; }
.para { padding-bottom: 10px; }
.fillgroup { margin-left: 14px; }
.tool.two { width: 26px; }
.two .icon { width: 12px; height: 12px; }
.pcols { display: grid; grid-template-columns: 80px 75px; gap: 5px; }
.labels { line-height: 11px; }
.spins { display: grid; gap: 3px; padding-top: 8px; }
.spins .pcols { align-items: center; height: 19px; }
.spin { display: flex; align-items: center; gap: 2px; }
.spin .icon { width: 12px; height: 12px; }
.field { flex: 1; min-width: 0; display: flex; height: 17px; background: #fff; border: 1px solid #b9b9b9; }
.field input { flex: 1; min-width: 0; padding-left: 2px; }
.steps { width: 12px; display: grid; border: 1px solid #c4c4c4; background: #e8e8e8; }
.steps button::after { content: ""; border: 2px solid transparent; border-bottom: 3px solid #222; border-top: 0; }
.steps button:last-child::after { border-bottom: 0; border-top: 3px solid #222; }
.decks { width: 29px; flex: none; padding-top: 4px; display: flex; flex-direction: column; align-items: center; gap: 2px; border-right: 1px solid #bbb; }
.decks > button:first-child { height: 18px; margin-bottom: 4px; }
.decks > button:first-child .icon { width: 9px; height: 9px; }
.deck { width: 23px; height: 23px; border-radius: 3px; }
.deck .icon { width: 16px; height: 16px; }
.deck.current { border: 1px solid #b5b5b5; background: #e9e9e9; }

.status { flex: none; height: 17px; margin-top: 1px; display: flex; align-items: center; border-top: 1px solid #ddd; border-bottom: 1px solid #999; }
.status > span { height: 12px; flex: none; border-left: 1px solid #bbb; padding-left: 4px; }
.status .c1 { width: 236px; border: 0; padding-left: 7px; }
.c2 { width: 214px; }
.c3 { width: 206px; text-align: center; }
.c4 { width: 25px; }
.status .c5 { width: 31px; padding-left: 1px; }
.c6 { width: 11px; }
.c7 { width: 21px; }
.status .c8 { flex: 1; }
.views { position: relative; height: 12px; width: 54px; display: flex; align-items: center; gap: 3px; padding-left: 4px; border-left: 1px solid #bbb; }
.views .icon { width: 12px; height: 10px; }
.ghost { position: absolute; left: 1px; top: -1px; width: 101px; height: 14px; border: 1px solid #d2d2d2; padding-left: 6px; color: #bbb; opacity: .7; white-space: nowrap; pointer-events: none; }
.zoomer { display: flex; align-items: center; height: 12px; width: 102px; border-left: 1px solid #bbb; padding: 0 2px; }
.zoomer svg { width: 11px; height: 11px; fill: #e6f1f9; stroke: #447094; }
.zoomer input { flex: 1; min-width: 0; height: 8px; appearance: none; background: linear-gradient(#999, #999) center / 100% 1px no-repeat; }
.zoomer input::-webkit-slider-thumb { appearance: none; width: 5px; height: 8px; border-radius: 3px; background: #4d7ea3; border: 1px solid #2f5878; }
.status .pct { width: 33px; padding-left: 3px; white-space: nowrap; }

.taskbar { flex: none; height: 28px; display: flex; background: linear-gradient(90deg, #0d1724 0, #0d1724 350px, #0c150e 480px, #0a130d 760px, #0c1520 980px); color: #fff; }
.task { position: relative; width: 35px; height: 28px; flex: none; }
.task .icon { width: 16px; height: 16px; }
.task:first-child .icon, .task:nth-child(2) .icon { width: 12px; height: 12px; }
.task.run::after { content: ""; position: absolute; left: 3px; right: 3px; bottom: 0; height: 2px; background: #76b9ed; }
.task.active { background: linear-gradient(#3a4650, #3a4650) center / 31px 100% no-repeat; }
.badge { position: absolute; left: 17px; top: 13px; width: 12px; height: 12px; border-radius: 6px; background: #484b50; border: 1px solid #aaa; font-size: 8px; line-height: 10px; }
.tray { margin-left: auto; display: flex; align-items: stretch; padding-right: 3px; }
.tray button { width: 18px; }
.tray .ink { width: 22px; margin-left: 1px; background: #26303c; }
.tray .lang { width: 26px; }
time { width: 60px; text-align: center; font-size: 8px; line-height: 12px; padding-top: 2px; white-space: nowrap; }
.tray .act { width: 36px; border-right: 1px solid #3c4650; }
</style>
